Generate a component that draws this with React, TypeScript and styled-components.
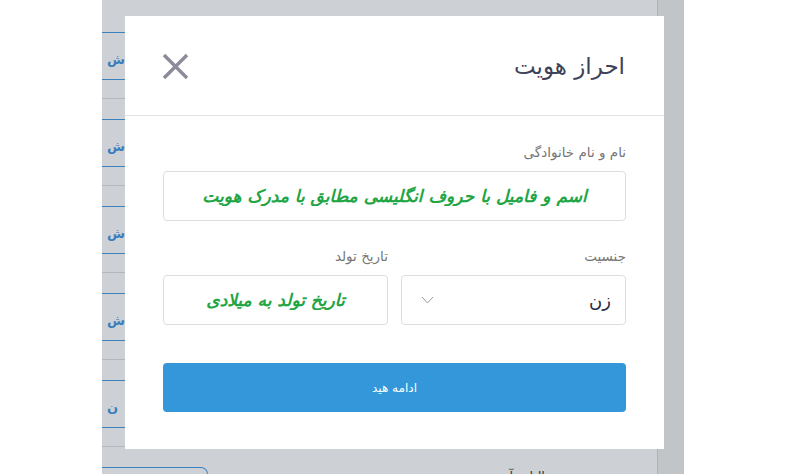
import * as React from "react";
import styled, { createGlobalStyle } from "styled-components";

const GlobalStyle = createGlobalStyle`
  html, body {
    margin: 0;
    padding: 0;
    background: #ffffff;
    font-family: "DejaVu Sans", "Noto Sans", sans-serif;
  }
  * {
    box-sizing: border-box;
  }
`;

const Screen = styled.div`
  width: 800px;
  height: 474px;
  overflow: hidden;
  display: flex;
  padding-left: 102px;
`;

const Frame = styled.div`
  position: relative;
  width: 582px;
  height: 474px;
  display: flex;
  background: #ffffff;
`;

const PageContent = styled.div`
  flex: 1;
  display: flex;
  flex-direction: column;
  padding-top: 32px;
  overflow: hidden;
`;

const Scrollbar = styled.div`
  width: 27px;
  background: #efefec;
  border-left: 1px solid #d6d6d6;
`;

const ListCard = styled.div`
  flex-shrink: 0;
  height: 48px;
  display: flex;
  align-items: center;
  padding: 6px 0 0 5px;
  border-top: 1px solid #3e95e2;
  border-bottom: 1px solid #3e95e2;
  color: #3a8fdc;
  font-size: 13px;
  font-weight: bold;
`;

const ListDivider = styled.div`
  flex-shrink: 0;
  height: 1px;
  margin: 18px 0 20px;
  background: #dcdcdc;
`;

const FooterRow = styled.div`
  flex-shrink: 0;
  display: flex;
  justify-content: space-between;
  align-items: flex-start;
`;

const OutlineBox = styled.div`
  width: 106px;
  height: 30px;
  border: 1px solid #3e95e2;
  border-left: none;
  border-radius: 0 7px 0 0;
`;

const FooterText = styled.div`
  margin: 2px 112px 0 0;
  font-size: 13px;
  color: #333;
`;

const Backdrop = styled.div`
  position: absolute;
  inset: 0;
  background: rgba(55, 71, 91, 0.25);
  padding: 16px 0 0 23px;
`;

const Modal = styled.div`
  width: 539px;
  height: 433px;
  background: #ffffff;
  direction: rtl;
  display: flex;
  flex-direction: column;
`;

const ModalHeader = styled.div`
  height: 100px;
  display: flex;
  align-items: center;
  justify-content: space-between;
  padding: 0 39px 0 35px;
  border-bottom: 1px solid #e3e3e3;
`;

const Title = styled.h2`
  margin: 0;
  font-size: 23px;
  font-weight: normal;
  color: #3e4257;
`;

const CloseButton = styled.button`
  width: 30px;
  height: 30px;
  padding: 0;
  border: none;
  background: transparent;
  display: flex;
  align-items: center;
  justify-content: center;
  margin-top: 2px;
`;

const ModalBody = styled.div`
  padding: 28px 38px 0 38px;
  display: flex;
  flex-direction: column;
`;

const Field = styled.div`
  display: flex;
  flex-direction: column;
  flex: 1;
`;

const Label = styled.label`
  font-size: 13.5px;
  color: #767676;
  margin-bottom: 10px;
  line-height: 17px;
`;

const TextInput = styled.input`
  height: 50px;
  width: 100%;
  border: 1px solid #dedede;
  border-radius: 4px;
  background: #fff;
  font-family: "DejaVu Sans", sans-serif;
  font-size: 17px;
  text-align: center;
  direction: rtl;
  outline: none;
  &::placeholder {
    color: #22a544;
    font-weight: bold;
    font-style: italic;
  }
`;

const FieldRow = styled.div`
  display: flex;
  gap: 13px;
  margin-top: 27px;
`;

const SelectBox = styled.div`
  height: 50px;
  border: 1px solid #dedede;
  border-radius: 4px;
  display: flex;
  align-items: center;
  justify-content: space-between;
  padding: 0 14px 0 19px;
  font-size: 18px;
  color: #2b2d45;
`;

const SubmitButton = styled.button`
  margin-top: 38px;
  height: 49px;
  border: none;
  border-radius: 4px;
  background: #3397da;
  color: #ffffff;
  font-family: "DejaVu Sans", sans-serif;
  font-size: 12px;
  direction: rtl;
`;

const listLetters = ["ش", "ش", "ش", "ش", "ن"];

export default function App() {
  return (
    <>
      <GlobalStyle />
      <Screen>
        <Frame>
          <PageContent>
            {listLetters.map((letter, i) => (
              <React.Fragment key={i}>
                <ListCard>{letter}</ListCard>
                <ListDivider />
              </React.Fragment>
            ))}
            <FooterRow>
              <OutlineBox />
              <FooterText>الیات آ</FooterText>
            </FooterRow>
          </PageContent>
          <Scrollbar />
          <Backdrop>
            <Modal>
              <ModalHeader>
                <Title>احراز هویت</Title>
                <CloseButton aria-label="بستن">
                  <svg width="27" height="27" viewBox="0 0 27 27">
                    <path
                      d="M2 2 L25 25 M25 2 L2 25"
                      stroke="#8b8b9b"
                      strokeWidth="3.4"
                      strokeLinecap="butt"
                    />
                  </svg>
                </CloseButton>
              </ModalHeader>
              <ModalBody>
                <Field>
                  <Label>نام و نام خانوادگی</Label>
                  <TextInput placeholder="اسم و فامیل با حروف انگلیسی مطابق با مدرک هویت" />
                </Field>
                <FieldRow>
                  <Field>
                    <Label>جنسیت</Label>
                    <SelectBox>
                      <span>زن</span>
                      <svg width="13" height="8" viewBox="0 0 13 8">
                        <path
                          d="M1 1 L6.5 7 L12 1"
                          fill="none"
                          stroke="#9a9a9a"
                          strokeWidth="1"
                        />
                      </svg>
                    </SelectBox>
                  </Field>
                  <Field>
                    <Label>تاریخ تولد</Label>
                    <TextInput placeholder="تاریخ تولد به میلادی" />
                  </Field>
                </FieldRow>
                <SubmitButton>ادامه هید</SubmitButton>
              </ModalBody>
            </Modal>
          </Backdrop>
        </Frame>
      </Screen>
    </>
  );
}
